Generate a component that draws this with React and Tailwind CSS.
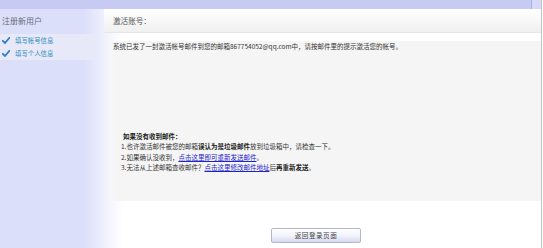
import React from "react";

const Check = () => (
  <svg width="8" height="7" viewBox="0 0 8 7" className="shrink-0">
    <path d="M0.8 3.8 L3 6 L7.4 0.8" fill="none" stroke="#2f7fd0" strokeWidth="1.8" strokeLinecap="round" strokeLinejoin="round" />
  </svg>
);

export default function App() {
  return (
    <div
      className="w-[543px] h-[248px] flex bg-white overflow-hidden text-[#333]"
      style={{ fontFamily: '"Noto Sans CJK SC", "Liberation Sans", sans-serif' }}
    >
      <div className="w-[541px] h-full flex flex-col">
        {/* top band */}
        <div className="h-[9px] flex shrink-0">
          <div className="w-[532px] bg-[#c7cbf4] border-r border-[#aab0e2]" />
          <div className="flex-1 bg-[#d6d9f7]" />
        </div>
        {/* body */}
        <div className="flex-1 flex bg-[linear-gradient(to_right,#dcdffa_0px,#dcdffa_84px,#ffffff_122px)]">
          {/* sidebar */}
          <div className="w-[104px] shrink-0 flex flex-col">
            <div className="pt-[6px] pl-[2px] h-[25px] text-[8px] leading-[12px] text-[#6a6a7a]">注册新用户</div>
            <div className="w-[97px] bg-[#e8e9f8] flex flex-col">
              <div className="h-[13px] flex items-center pl-[2px] gap-[5px]">
                <Check />
                <span className="text-[6.4px] leading-[13px] text-[#2f8cc0]">填写帐号信息</span>
              </div>
              <div className="h-[13px] flex items-center pl-[2px] gap-[5px]">
                <Check />
                <span className="text-[6.4px] leading-[13px] text-[#2f8cc0]">填写个人信息</span>
              </div>
            </div>
          </div>
          {/* main */}
          <div className="flex-1 flex flex-col">
            <div className="h-[24px] flex items-center pl-[9px] bg-[linear-gradient(to_bottom,#ffffff,#f0f0f0)] border-b border-[#e6e6e6] text-[7.6px] text-[#555]">
              激活账号：
            </div>
            <div className="h-[8px]" />
            <div className="h-[160px] pl-[9px] pt-[1px] bg-[linear-gradient(to_right,rgba(245,245,245,0),#f5f5f5_14px)] text-[6.5px] leading-[9px]">
              <div>
                系统已发了一封激活帐号邮件到您的邮箱867754052@qq.com中，请按邮件里的提示激活您的帐号。
              </div>
              <div className="mt-[80px] pl-[8px] leading-[10.3px]">
                <div className="font-bold pl-[2px] text-[#222]">如果没有收到邮件：</div>
                <div>
                  1.也许激活邮件被您的邮箱<span className="font-bold text-[#222]">误认为是垃圾邮件</span>放到垃圾箱中，请检查一下。
                </div>
                <div>
                  2.如果确认没收到，<span className="text-[#2222cc] underline">点击这里即可重新发送邮件</span>。
                </div>
                <div>
                  3.无法从上述邮箱查收邮件？<span className="text-[#2222cc] underline">点击这里修改邮件地址</span>后<span className="font-bold text-[#222]">再重新发送</span>。
                </div>
              </div>
            </div>
            <div className="pt-[27px] pl-[167px]">
              <button className="w-[90px] h-[15px] flex items-center justify-center rounded-[2px] border border-[#b4b6c8] bg-[linear-gradient(to_bottom,#ffffff,#f2f3fb_50%,#d6d9f0)] text-[6.6px] text-[#444] tracking-[0.5px]">
                返回登录页面
              </button>
            </div>
          </div>
        </div>
      </div>
      <div className="w-[1px] h-full bg-[#c4c4c8]" />
      <div className="flex-1 bg-white" />
    </div>
  );
}
